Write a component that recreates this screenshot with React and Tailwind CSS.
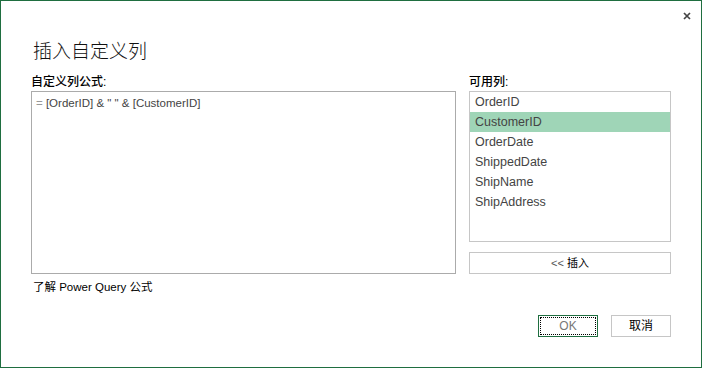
const columns = ['OrderID', 'CustomerID', 'OrderDate', 'ShippedDate', 'ShipName', 'ShipAddress'];

export default function App() {
  const selected = 'CustomerID';

  return (
    <div className="w-[702px] h-[368px] bg-white border border-[#1f6e40] font-['Liberation_Sans','Noto_Sans_CJK_SC',sans-serif] text-black overflow-hidden">
      {/* Close */}
      <div className="flex justify-end h-[30px] pt-[11px] pr-[10px]">
        <svg width="8" height="8" viewBox="0 0 8 8" className="text-[#444]">
          <path d="M1 1L7 7M7 1L1 7" stroke="currentColor" strokeWidth="1.7" />
        </svg>
      </div>

      <div className="px-[30px]">
        {/* Title */}
        <h1 className="mt-[11px] text-[19px] leading-[19px] font-light pl-[2px] text-[#111]">插入自定义列</h1>

        {/* Labels */}
        <div className="flex mt-[14px] text-[12px] leading-[14px] font-medium">
          <div className="w-[438px]">自定义列公式:</div>
          <div>可用列:</div>
        </div>

        <div className="flex gap-[13px] mt-[2px]">
          {/* Formula */}
          <div className="w-[425px] flex flex-col">
            <div className="h-[183px] border border-[#ababab] pl-[4px] pt-[4px] text-[11.5px] leading-[14px] text-[#444]">
              <span className="text-[#999]">= </span>[OrderID] &amp; " " &amp; [CustomerID]
            </div>
            <div className="mt-[6px] pl-[2px] text-[11.5px] leading-[14px]">
              了解 Power Query 公式
            </div>
          </div>

          {/* Columns */}
          <div className="w-[202px] flex flex-col">
            <div className="h-[151px] border border-[#c6c6c6] text-[12.5px] text-[#444]">
              {columns.map((c) => (
                <div
                  key={c}
                  className={`h-[20px] leading-[21px] pl-[5px] ${c === selected ? 'bg-[#9fd5b7]' : ''}`}
                >
                  {c}
                </div>
              ))}
            </div>
            <button className="mt-[10px] h-[22px] border border-[#c6c6c6] bg-white text-[11px] leading-[20px] flex items-center justify-center gap-[3px]">
              <span className="text-[#555]">&lt;&lt;</span>
              <span>插入</span>
            </button>
          </div>
        </div>

        {/* Footer buttons */}
        <div className="flex justify-end gap-[13px] mt-[21px]">
          <button className="w-[60px] h-[22px] border border-[#1f6e40] p-[1px] bg-white">
            <div className="h-full border border-dotted border-black flex items-center justify-center text-[12px] text-[#777]">
              OK
            </div>
          </button>
          <button className="w-[60px] h-[22px] border border-[#c6c6c6] bg-white flex items-center justify-center text-[12px]">
            取消
          </button>
        </div>
      </div>
    </div>
  );
}
